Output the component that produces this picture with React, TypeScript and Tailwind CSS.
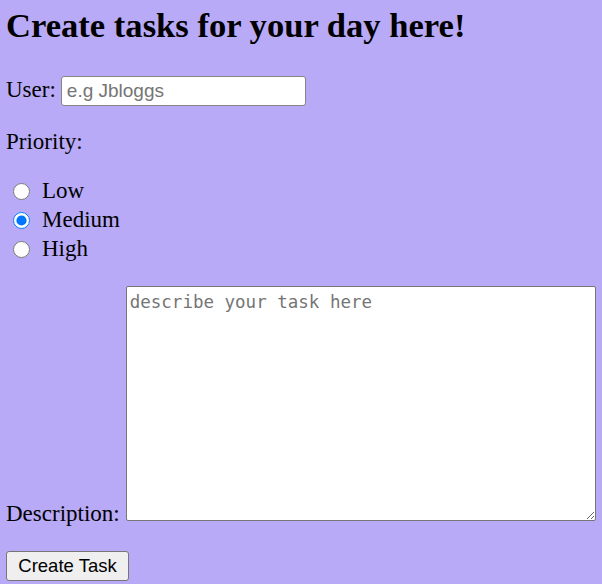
import React, { useState } from 'react';

const serif = { fontFamily: '"Liberation Serif", "Times New Roman", serif' };

export default function App() {
  const [priority, setPriority] = useState('medium');

  const options = [
    { id: 'low', label: 'Low' },
    { id: 'medium', label: 'Medium' },
    { id: 'high', label: 'High' },
  ];

  return (
    <div className="w-[602px] h-[584px] bg-[#b8aaf7] text-black overflow-hidden pl-[6px]" style={serif}>
      <h1 className="text-[34.6px] font-bold leading-[46px] pt-[2px]">Create tasks for your day here!</h1>

      <div className="flex items-center h-[29px] mt-[28px] text-[23px]">
        <span>User:</span>
        <input
          type="text"
          placeholder="e.g Jbloggs"
          className="ml-[5px] w-[245px] h-[30px] bg-white border border-[#858585] rounded-[3px] px-[5px] text-[19px] placeholder:text-[#757575] outline-none"
          style={{ fontFamily: '"Liberation Sans", Arial, sans-serif' }}
        />
      </div>

      <div className="flex items-center h-[29px] mt-[23px] text-[23px]">Priority:</div>

      <div className="mt-[20px] flex flex-col">
        {options.map((o) => (
          <label key={o.id} className="flex items-center h-[29px] text-[23px]">
            <input
              type="radio"
              name="priority"
              checked={priority === o.id}
              onChange={() => setPriority(o.id)}
              className="w-[17px] h-[17px] ml-[7px] mr-[12px] accent-[#0075ff]"
            />
            {o.label}
          </label>
        ))}
      </div>

      <div className="flex items-end mt-[22px]">
        <span className="text-[23px] leading-[22px] mb-[-4px]">Description:</span>
        <textarea
          placeholder="describe your task here"
          className="ml-[6px] w-[470px] h-[235px] bg-white border border-[#767676] rounded-[2px] px-[3px] py-[2px] text-[17.5px] placeholder:text-[#757575] outline-none"
          style={{ fontFamily: '"DejaVu Sans Mono", "Liberation Mono", monospace' }}
        />
      </div>

      <button
        className="mt-[30px] w-[123px] h-[30px] bg-[#efefef] border border-[#767676] rounded-[3px] text-[18.5px] text-black leading-none"
        style={{ fontFamily: '"Liberation Sans", Arial, sans-serif' }}
      >
        Create Task
      </button>
    </div>
  );
}
